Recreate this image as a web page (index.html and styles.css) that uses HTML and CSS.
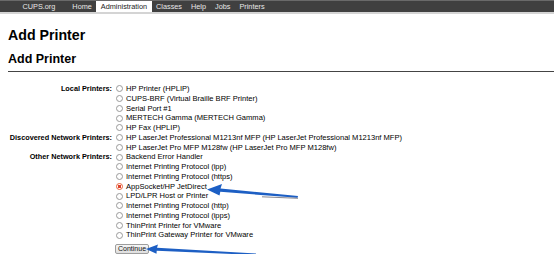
FILE: index.html
```html
<!DOCTYPE html>
<html lang="en">
<head>
    <meta charset="UTF-8">
    <title>Add Printer - CUPS</title>
    <link rel="stylesheet" href="styles.css">
</head>
<body>
    <ul class="header">
        <li class="home"><a href="#">CUPS.org</a></li>
        <li><a href="#">Home</a></li>
        <li class="active"><a href="#">Administration</a></li>
        <li><a href="#">Classes</a></li>
        <li><a href="#">Help</a></li>
        <li><a href="#">Jobs</a></li>
        <li><a href="#">Printers</a></li>
    </ul>

    <div class="body">
        <h1 class="title">Add Printer</h1>
        <h2 class="title sub">Add Printer</h2>

        <form>
            <table class="device-list">
                <tr>
                    <th>Local Printers:</th>
                    <td>
                        <label><input type="radio" name="device"> HP Printer (HPLIP)</label>
                        <label><input type="radio" name="device"> CUPS-BRF (Virtual Braille BRF Printer)</label>
                        <label><input type="radio" name="device"> Serial Port #1</label>
                        <label><input type="radio" name="device"> MERTECH Gamma (MERTECH Gamma)</label>
                        <label><input type="radio" name="device"> HP Fax (HPLIP)</label>
                    </td>
                </tr>
                <tr>
                    <th>Discovered Network Printers:</th>
                    <td>
                        <label><input type="radio" name="device"> HP LaserJet Professional M1213nf MFP (HP LaserJet Professional M1213nf MFP)</label>
                        <label><input type="radio" name="device"> HP LaserJet Pro MFP M128fw (HP LaserJet Pro MFP M128fw)</label>
                    </td>
                </tr>
                <tr>
                    <th>Other Network Printers:</th>
                    <td>
                        <label><input type="radio" name="device"> Backend Error Handler</label>
                        <label><input type="radio" name="device"> Internet Printing Protocol (ipp)</label>
                        <label><input type="radio" name="device"> Internet Printing Protocol (https)</label>
                        <label><input type="radio" name="device" checked> AppSocket/HP JetDirect</label>
                        <label><input type="radio" name="device"> LPD/LPR Host or Printer</label>
                        <label><input type="radio" name="device"> Internet Printing Protocol (http)</label>
                        <label><input type="radio" name="device"> Internet Printing Protocol (ipps)</label>
                        <label><input type="radio" name="device"> ThinPrint Printer for VMware</label>
                        <label><input type="radio" name="device"> ThinPrint Gateway Printer for VMware</label>
                    </td>
                </tr>
                <tr>
                    <th></th>
                    <td><button type="button" class="continue">Continue</button></td>
                </tr>
            </table>
        </form>
    </div>

    <!-- annotation arrows drawn over the screenshot -->
    <svg class="annotations" width="554" height="262" viewBox="0 0 554 262">
        <g fill="#1d5fc4">
            <path d="M207 189.5 L222 184 L220.5 188.4 L298 196 L297.6 197.8 L220.3 191.8 L219.5 195.5 Z"/>
            <path d="M146 249 L158 244.6 L157 247.8 L256 253.4 L255.6 255 L156.7 250.8 L156.5 253.8 Z"/>
        </g>
        <g stroke="#2a2a3a" stroke-width="0.8" opacity="0.7">
            <line x1="262" y1="196.8" x2="298" y2="198.3"/>
            <line x1="225" y1="255.1" x2="256" y2="255.7"/>
        </g>
    </svg>
</body>
</html>
```

FILE: styles.css
```css
body { margin: 0; font-family: "Liberation Sans", Arial, Helvetica, sans-serif; color: #000; background: #fff; position: relative; }
.header { list-style: none; margin: 0; padding: 0 0 0 18px; display: flex; background: #404040; border-top: 1px solid #6a6a6a; border-bottom: 2px solid #d4d4d4; box-sizing: border-box; height: 14px; }
.header li { display: flex; align-items: center; }
.header li.home { margin-right: 8px; }
.header a { color: #e8e8e8; text-decoration: none; font-size: 7.3px; padding: 0 4.5px; }
.header li.active { background: #fff; }
.header li.active a { color: #222; }
.body { padding: 0 8px; }
.title { margin: 0; font-weight: bold; }
h1.title { font-size: 14.2px; line-height: 17px; padding-top: 13px; }
h2.title.sub { font-size: 12.5px; line-height: 15px; margin-top: 8px; padding-bottom: 4px; border-bottom: 1.5px solid #444; margin-right: -8px; }
form { margin-top: 12px; }
.device-list { border-collapse: collapse; font-size: 7.55px; line-height: 9.75px; }
.device-list th { text-align: right; vertical-align: top; font-weight: bold; font-size: 7.3px; padding: 0 3px 0 0; width: 104px; white-space: nowrap; }
.device-list td { padding: 0; vertical-align: top; }
.device-list label { display: flex; align-items: center; white-space: nowrap; height: 9.75px; }
.device-list input[type=radio] { appearance: none; width: 7px; height: 7px; margin: 0 3px 0 1px; border: 0.8px solid #9a9a9a; border-radius: 50%; background: #fff; box-sizing: border-box; }
.device-list input[type=radio]:checked { border-color: #e8643c; background: radial-gradient(circle, #e0402a 0 1.5px, #fff 1.7px); }
.continue { font-family: inherit; font-size: 7px; line-height: 8px; padding: 0 2px; margin-top: 4px; height: 10px; border: 1px solid #9d9d9d; border-radius: 2px; background: linear-gradient(#f6f6f6, #dedede); color: #111; }
.annotations { position: absolute; left: 0; top: 0; pointer-events: none; }
```
